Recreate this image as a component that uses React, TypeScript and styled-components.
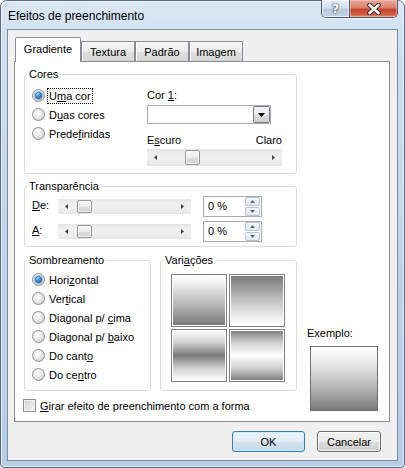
import React from 'react';
import styled, { createGlobalStyle, css } from 'styled-components';

const GlobalStyle = createGlobalStyle`
  html, body { margin: 0; padding: 0; background: #fff; }
  body { font-family: "Liberation Sans", Arial, sans-serif; font-size: 11px; color: #000; }
  * { box-sizing: border-box; }
  u { text-decoration: underline; text-underline-offset: 1px; }
`;

const Window = styled.div`
  width: 405px;
  height: 468px;
  border: 1px solid #5a6a7c;
  border-radius: 7px 7px 4px 4px;
  background: linear-gradient(180deg, #dbe7f4 0%, #cddff1 10%, #bfd4eb 55%, #b7cee7 100%);
  box-shadow: inset 0 0 0 1px rgba(255, 255, 255, 0.6);
  padding: 0 6px 6px 6px;
  display: flex;
  flex-direction: column;
`;

const TitleBar = styled.div`
  height: 28px;
  display: flex;
  align-items: flex-start;
`;

const Title = styled.div`
  flex: 1;
  font-size: 12px;
  line-height: 14px;
  margin: 8px 0 0 1px;
  color: #000;
`;

const CaptionGroup = styled.div`
  display: flex;
  height: 18px;
  border: 1px solid #4d5b6c;
  border-top: none;
  border-radius: 0 0 5px 5px;
  overflow: hidden;
  margin-top: -1px;
  box-shadow: 0 1px 0 rgba(255, 255, 255, 0.6);
`;

const CaptionButton = styled.div<{ $close?: boolean }>`
  height: 100%;
  display: flex;
  align-items: center;
  justify-content: center;
  ${(p) =>
    p.$close
      ? css`
          width: 47px;
          background: linear-gradient(180deg, #e9a99b 0%, #d8826c 45%, #c7462c 55%, #d15c3f 85%, #e4957c 100%);
          box-shadow: inset 0 0 0 1px rgba(255, 210, 200, 0.5);
        `
      : css`
          width: 28px;
          border-right: 1px solid #4d5b6c;
          background: linear-gradient(180deg, #e6eef7 0%, #d4e0ee 45%, #b9c9dc 55%, #c5d5e8 100%);
          box-shadow: inset 0 0 0 1px rgba(255, 255, 255, 0.55);
        `}
`;

const HelpGlyph = styled.span`
  font-family: "DejaVu Sans", sans-serif;
  font-weight: bold;
  font-size: 13px;
  line-height: 13px;
  color: #fff;
  text-shadow: 0 0 1px #3b4a5e, 0 0 1px #3b4a5e, 0 0 2px #3b4a5e;
`;

const Client = styled.div`
  flex: 1;
  border: 1px solid #7d8da0;
  background: #f0f0f0;
  padding: 7px 7px 0 6px;
  display: flex;
  flex-direction: column;
`;

const TabStrip = styled.div`
  height: 24px;
  display: flex;
  align-items: flex-end;
  padding-left: 1px;
`;

const Tab = styled.div<{ $active?: boolean }>`
  position: relative;
  display: flex;
  align-items: center;
  justify-content: center;
  border: 1px solid #898c95;
  border-bottom: none;
  font-size: 11px;
  ${(p) =>
    p.$active
      ? css`
          width: 66px;
          height: 25px;
          margin-bottom: -1px;
          padding-bottom: 2px;
          background: #fff;
          z-index: 1;
          border-radius: 2px 2px 0 0;
        `
      : css`
          width: 54px;
          height: 20px;
          padding-top: 1px;
          background: linear-gradient(180deg, #f4f4f4 0%, #ececec 50%, #e0e0e0 51%, #d6d6d6 100%);
          box-shadow: inset 1px 1px 0 #fbfbfb;
        `}
`;

const Panel = styled.div`
  width: 376px;
  height: 361px;
  border: 1px solid #898c95;
  background: #fff;
  padding: 6px 9px 0 9px;
  display: grid;
  grid-template-columns: 273px 1fr;
  grid-template-rows: auto auto auto auto;
  grid-template-areas:
    'cores .'
    'trans .'
    'bottom ex'
    'check ex';
  align-content: start;
`;

const Group = styled.fieldset<{ $w: number; $h: number; $mt?: number; $area?: string }>`
  grid-area: ${(p) => p.$area ?? 'auto'};
  margin: ${(p) => p.$mt ?? 0}px 0 0 0;
  padding: 0;
  min-width: 0;
  border: 1px solid #d5dfe5;
  border-radius: 3px;
  width: ${(p) => p.$w}px;
  height: ${(p) => p.$h}px;
`;

const Legend = styled.legend`
  margin-left: 2px;
  padding: 0 2px;
  font-size: 11px;
  line-height: 13px;
`;

const CoresBody = styled.div`
  display: flex;
  padding: 5px 7px 0 7px;
`;

const RadioList = styled.div<{ $w?: number }>`
  display: flex;
  flex-direction: column;
  width: ${(p) => (p.$w ? `${p.$w}px` : 'auto')};
`;

const RadioRow = styled.div`
  height: 19px;
  display: flex;
  align-items: center;
  gap: 4px;
`;

const RadioCircle = styled.span<{ $on?: boolean }>`
  flex: none;
  width: 13px;
  height: 13px;
  border-radius: 50%;
  border: 1px solid #8e8f8f;
  background: radial-gradient(circle at 40% 35%, #ffffff 0%, #eeeeee 35%, #d2d2d2 80%, #c4c4c4 100%);
  display: flex;
  align-items: center;
  justify-content: center;
  &::after {
    content: '';
    width: 7px;
    height: 7px;
    border-radius: 50%;
    display: ${(p) => (p.$on ? 'block' : 'none')};
    background: radial-gradient(circle at 40% 35%, #8fd0f5 0%, #3a8acb 40%, #134f8b 100%);
    box-shadow: 0 0 0 1px rgba(40, 90, 140, 0.35);
  }
`;

const Focused = styled.span`
  outline: 1px dotted #000;
  outline-offset: 0;
  padding: 1px 1px;
  margin-left: -1px;
`;

const RightCol = styled.div`
  width: 135px;
  display: flex;
  flex-direction: column;
`;

const FieldLabel = styled.div<{ $mt: number }>`
  margin-top: ${(p) => p.$mt}px;
  line-height: 13px;
  display: flex;
  justify-content: space-between;
`;

const Combo = styled.div`
  margin-top: 3px;
  width: 124px;
  height: 19px;
  border: 1px solid #a5acb5;
  background: #fff;
  display: flex;
  justify-content: flex-end;
`;

const ComboButton = styled.div`
  width: 17px;
  height: 17px;
  border: 1px solid #7a7a7a;
  border-radius: 2px;
  background: linear-gradient(180deg, #f4f4f4 0%, #ebebeb 50%, #dcdcdc 51%, #d0d0d0 100%);
  display: flex;
  align-items: center;
  justify-content: center;
`;

const ScrollBar = styled.div<{ $w: number; $h: number; $mt?: number }>`
  flex: none;
  width: ${(p) => p.$w}px;
  height: ${(p) => p.$h}px;
  margin-top: ${(p) => p.$mt ?? 0}px;
  display: flex;
  background: linear-gradient(180deg, #e3e3e3 0%, #eeeeee 25%, #f0f0f0 60%, #e6e6e6 100%);
`;

const ScrollArrow = styled.div`
  width: 17px;
  flex: none;
  display: flex;
  align-items: center;
  justify-content: center;
`;

const ScrollTrack = styled.div`
  flex: 1;
  display: flex;
  align-items: center;
`;

const Thumb = styled.div<{ $at: number }>`
  margin-left: ${(p) => p.$at}px;
  width: 15px;
  height: calc(100% - 2px);
  border: 1px solid #979797;
  border-radius: 2px;
  background: linear-gradient(180deg, #f7f7f7 0%, #ececec 50%, #dddddd 51%, #d3d3d3 100%);
  box-shadow: inset 0 0 0 1px rgba(255, 255, 255, 0.7);
`;

const TransBody = styled.div`
  display: flex;
  flex-direction: column;
  gap: 4px;
  padding: 3px 7px 0 7px;
`;

const TRow = styled.div`
  height: 21px;
  display: flex;
  align-items: center;
`;

const TLabel = styled.div`
  width: 26px;
  line-height: 13px;
  margin-top: -3px;
`;

const TextBox = styled.div`
  margin-left: 12px;
  width: 59px;
  height: 21px;
  border: 1px solid #a5acb5;
  background: #fff;
  display: flex;
  align-items: center;
  padding-left: 4px;
`;

const TextValue = styled.span`
  flex: 1;
  line-height: 13px;
`;

const SpinCol = styled.div`
  width: 16px;
  height: 19px;
  display: flex;
  flex-direction: column;
  gap: 1px;
  padding: 0 1px 0 0;
`;

const SpinBtn = styled.div`
  flex: 1;
  border: 1px solid #b9c2d0;
  border-radius: 2px;
  background: linear-gradient(180deg, #f5f7fa 0%, #e4e9f0 100%);
  display: flex;
  align-items: center;
  justify-content: center;
`;

const BottomRow = styled.div`
  grid-area: bottom;
  display: flex;
  gap: 9px;
  margin-top: 7px;
`;

const ShadeBody = styled.div`
  padding: 3px 7px 0 7px;
`;

const VarGrid = styled.div`
  display: grid;
  grid-template-columns: 56px 56px;
  grid-auto-rows: 53px;
  gap: 2px;
  padding: 7px 0 0 10px;
`;

const Swatch = styled.div<{ $bg: string }>`
  border: 1px solid #7f7f7f;
  box-shadow: inset 0 0 0 1px #ffffff;
  background: ${(p) => p.$bg};
`;

const CheckRow = styled.div`
  grid-area: check;
  margin: 8px 0 0 -1px;
  height: 13px;
  display: flex;
  align-items: center;
  gap: 4px;
`;

const CheckBox = styled.span`
  flex: none;
  width: 13px;
  height: 13px;
  border: 1px solid #8e8f8f;
  background: linear-gradient(135deg, #cbcbcb 0%, #e9e9e9 60%, #f6f6f6 100%);
  box-shadow: inset 0 0 0 1px #f4f4f4;
`;

const Example = styled.div`
  grid-area: ex;
  align-self: end;
  margin-bottom: 1px;
  display: flex;
  flex-direction: column;
`;

const ExampleLabel = styled.div`
  margin-left: 10px;
  line-height: 13px;
`;

const Preview = styled.div`
  margin: 6px 0 0 13px;
  width: 68px;
  height: 65px;
  border: 1px solid #6f6f6f;
  background: linear-gradient(180deg, #ffffff 0%, #f0f0f0 20%, #bdbdbd 60%, #7a7a7a 100%);
`;

const ButtonRow = styled.div`
  margin-top: 9px;
  padding-right: 9px;
  display: flex;
  justify-content: flex-end;
  gap: 12px;
`;

const Button = styled.div<{ $w: number; $default?: boolean }>`
  width: ${(p) => p.$w}px;
  height: 21px;
  border-radius: 3px;
  display: flex;
  align-items: center;
  justify-content: center;
  font-size: 11px;
  border: 1px solid ${(p) => (p.$default ? '#3c7fb1' : '#707070')};
  background: ${(p) =>
    p.$default
      ? 'linear-gradient(180deg, #ecf4fa 0%, #e2eef7 50%, #d2e3f0 51%, #c7dcec 100%)'
      : 'linear-gradient(180deg, #f2f2f2 0%, #ebebeb 50%, #dddddd 51%, #cfcfcf 100%)'};
  box-shadow: inset 0 0 0 1px ${(p) => (p.$default ? 'rgba(200,235,255,0.9)' : 'rgba(255,255,255,0.7)')};
`;

const Arrow = ({ dir, color = '#404040' }: { dir: 'left' | 'right' | 'up' | 'down'; color?: string }) => {
  const pts: Record<string, string> = {
    left: '3,0 0,2.5 3,5',
    right: '0,0 3,2.5 0,5',
    up: '0,3 2.5,0 5,3',
    down: '0,0 5,0 2.5,3',
  };
  const horiz = dir === 'left' || dir === 'right';
  return (
    <svg width={horiz ? 3 : 5} height={horiz ? 5 : 3} viewBox={horiz ? '0 0 3 5' : '0 0 5 3'}>
      <polygon points={pts[dir]} fill={color} />
    </svg>
  );
};

const Slider = ({ w, h, at, mt }: { w: number; h: number; at: number; mt?: number }) => (
  <ScrollBar $w={w} $h={h} $mt={mt}>
    <ScrollArrow>
      <Arrow dir="left" />
    </ScrollArrow>
    <ScrollTrack>
      <Thumb $at={at} />
    </ScrollTrack>
    <ScrollArrow>
      <Arrow dir="right" />
    </ScrollArrow>
  </ScrollBar>
);

const Radio = ({ on, children }: { on?: boolean; children: React.ReactNode }) => (
  <RadioRow>
    <RadioCircle $on={on} />
    <span>{children}</span>
  </RadioRow>
);

const Percent = () => (
  <TextBox>
    <TextValue>0 %</TextValue>
    <SpinCol>
      <SpinBtn>
        <Arrow dir="up" color="#4b6690" />
      </SpinBtn>
      <SpinBtn>
        <Arrow dir="down" color="#4b6690" />
      </SpinBtn>
    </SpinCol>
  </TextBox>
);

export default function App() {
  return (
    <>
      <GlobalStyle />
      <Window>
        <TitleBar>
          <Title>Efeitos de preenchimento</Title>
          <CaptionGroup>
            <CaptionButton>
              <HelpGlyph>?</HelpGlyph>
            </CaptionButton>
            <CaptionButton $close>
              <svg width="14" height="12" viewBox="0 0 14 12">
                <path
                  d="M2.5 2 L11.5 10 M11.5 2 L2.5 10"
                  stroke="#3a2a28"
                  strokeWidth="4.6"
                  fill="none"
                  strokeLinecap="round"
                />
                <path
                  d="M2.5 2 L11.5 10 M11.5 2 L2.5 10"
                  stroke="#ffffff"
                  strokeWidth="2.6"
                  fill="none"
                  strokeLinecap="round"
                />
              </svg>
            </CaptionButton>
          </CaptionGroup>
        </TitleBar>
        <Client>
          <TabStrip>
            <Tab $active>Gradiente</Tab>
            <Tab>Textura</Tab>
            <Tab>Padrão</Tab>
            <Tab>Imagem</Tab>
          </TabStrip>
          <Panel>
            <Group $area="cores" $w={273} $h={106}>
              <Legend>Cores</Legend>
              <CoresBody>
                <RadioList $w={115}>
                  <RadioRow>
                    <RadioCircle $on />
                    <Focused>
                      U<u>m</u>a cor
                    </Focused>
                  </RadioRow>
                  <Radio>
                    D<u>u</u>as cores
                  </Radio>
                  <Radio>
                    Prede<u>f</u>inidas
                  </Radio>
                </RadioList>
                <RightCol>
                  <FieldLabel $mt={3}>
                    <span>
                      Cor <u>1</u>:
                    </span>
                  </FieldLabel>
                  <Combo>
                    <ComboButton>
                      <svg width="7" height="4" viewBox="0 0 7 4">
                        <polygon points="0,0 7,0 3.5,4" fill="#000" />
                      </svg>
                    </ComboButton>
                  </Combo>
                  <FieldLabel $mt={10}>
                    <span>
                      E<u>s</u>curo
                    </span>
                    <span>Claro</span>
                  </FieldLabel>
                  <Slider w={135} h={17} at={21} mt={2} />
                </RightCol>
              </CoresBody>
            </Group>

            <Group $area="trans" $w={273} $h={67} $mt={6}>
              <Legend>Transparência</Legend>
              <TransBody>
                <TRow>
                  <TLabel>
                    <u>D</u>e:
                  </TLabel>
                  <Slider w={133} h={15} at={2} />
                  <Percent />
                </TRow>
                <TRow>
                  <TLabel>
                    <u>A</u>:
                  </TLabel>
                  <Slider w={133} h={15} at={2} />
                  <Percent />
                </TRow>
              </TransBody>
            </Group>

            <BottomRow>
              <Group $w={127} $h={137}>
                <Legend>Sombreamento</Legend>
                <ShadeBody>
                  <RadioList>
                    <Radio on>
                      Hori<u>z</u>ontal
                    </Radio>
                    <Radio>
                      Ver<u>t</u>ical
                    </Radio>
                    <Radio>
                      Diagonal p/ <u>c</u>ima
                    </Radio>
                    <Radio>
                      Diagonal p/ <u>b</u>aixo
                    </Radio>
                    <Radio>
                      Do cant<u>o</u>
                    </Radio>
                    <Radio>
                      Do ce<u>n</u>tro
                    </Radio>
                  </RadioList>
                </ShadeBody>
              </Group>
              <Group $w={137} $h={137}>
                <Legend>
                  Vari<u>a</u>ções
                </Legend>
                <VarGrid>
                  <Swatch $bg="linear-gradient(180deg, #ffffff 0%, #f2f2f2 15%, #b4b4b4 60%, #777777 100%)" />
                  <Swatch $bg="linear-gradient(180deg, #777777 0%, #b4b4b4 40%, #f2f2f2 85%, #ffffff 100%)" />
                  <Swatch $bg="linear-gradient(180deg, #ffffff 0%, #d0d0d0 25%, #7a7a7a 50%, #d0d0d0 75%, #ffffff 100%)" />
                  <Swatch $bg="linear-gradient(180deg, #7a7a7a 0%, #d0d0d0 25%, #ffffff 50%, #d0d0d0 75%, #7a7a7a 100%)" />
                </VarGrid>
              </Group>
            </BottomRow>

            <CheckRow>
              <CheckBox />
              <span>
                <u>G</u>irar efeito de preenchimento com a forma
              </span>
            </CheckRow>

            <Example>
              <ExampleLabel>Exemplo:</ExampleLabel>
              <Preview />
            </Example>
          </Panel>
          <ButtonRow>
            <Button $w={73} $default>
              OK
            </Button>
            <Button $w={64}>Cancelar</Button>
          </ButtonRow>
        </Client>
      </Window>
    </>
  );
}
